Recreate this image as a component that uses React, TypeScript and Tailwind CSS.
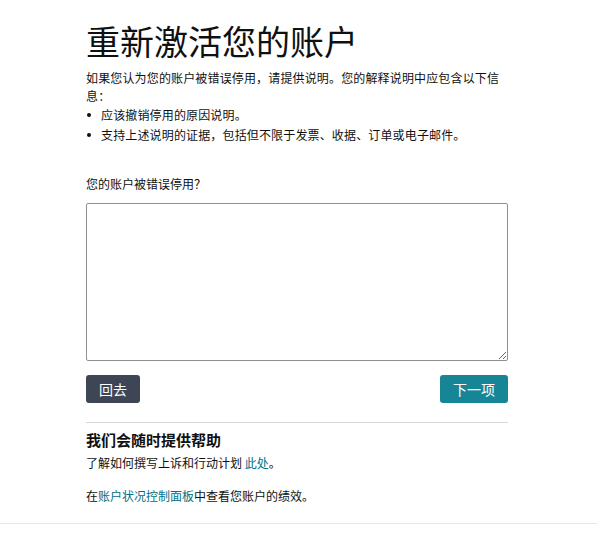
import React from "react";

export default function App() {
  const font = { fontFamily: '"Noto Sans CJK SC", "Noto Sans", sans-serif' };
  return (
    <div className="w-[597px] min-h-[539px] bg-white text-[#0f1111]" style={font}>
      <div className="ml-[86px] w-[422px] pt-[21px]">
        <h1 className="text-[34px] leading-[40px] font-normal text-[#0f1111]">重新激活您的账户</h1>
        <p className="mt-[8px] text-[12px] leading-[18px] tracking-[0.15px]">
          如果您认为您的账户被错误停用，请提供说明。您的解释说明中应包含以下信息：
        </p>
        <ul className="text-[12px] leading-[20px] tracking-[0.15px]">
          <li className="flex items-center">
            <span className="w-[15px] flex items-center">
              <span className="block w-[4px] h-[4px] rounded-full bg-[#0f1111] ml-[1px]" />
            </span>
            <span>应该撤销停用的原因说明。</span>
          </li>
          <li className="flex items-center">
            <span className="w-[15px] flex items-center">
              <span className="block w-[4px] h-[4px] rounded-full bg-[#0f1111] ml-[1px]" />
            </span>
            <span>支持上述说明的证据，包括但不限于发票、收据、订单或电子邮件。</span>
          </li>
        </ul>
        <label className="block mt-[30px] text-[12px] leading-[18px]">您的账户被错误停用？</label>
        <textarea className="block mt-[10px] w-[422px] h-[158px] border border-[#8d9096] rounded-[2px] outline-none resize-y p-[6px] text-[12px]" />
        <div className="mt-[14px] flex justify-between">
          <button className="h-[28px] px-[13px] rounded-[3px] bg-[#3e4655] text-white text-[14px] leading-[28px]">
            回去
          </button>
          <button className="h-[28px] px-[13px] rounded-[3px] bg-[#168596] text-white text-[14px] leading-[28px]">
            下一项
          </button>
        </div>
        <div className="mt-[19px] border-t border-[#d5d9d9]" />
        <h2 className="mt-[7px] text-[15px] leading-[20px] font-bold">我们会随时提供帮助</h2>
        <p className="mt-[4px] text-[12px] leading-[18px]">
          了解如何撰写上诉和行动计划 <a className="text-[#007185]">此处</a>。
        </p>
        <p className="mt-[15px] text-[12px] leading-[18px]">
          在<a className="text-[#007185]">账户状况控制面板</a>中查看您账户的绩效。
        </p>
      </div>
      <div className="mt-[18px] border-t border-[#e7e7e7]" />
    </div>
  );
}
